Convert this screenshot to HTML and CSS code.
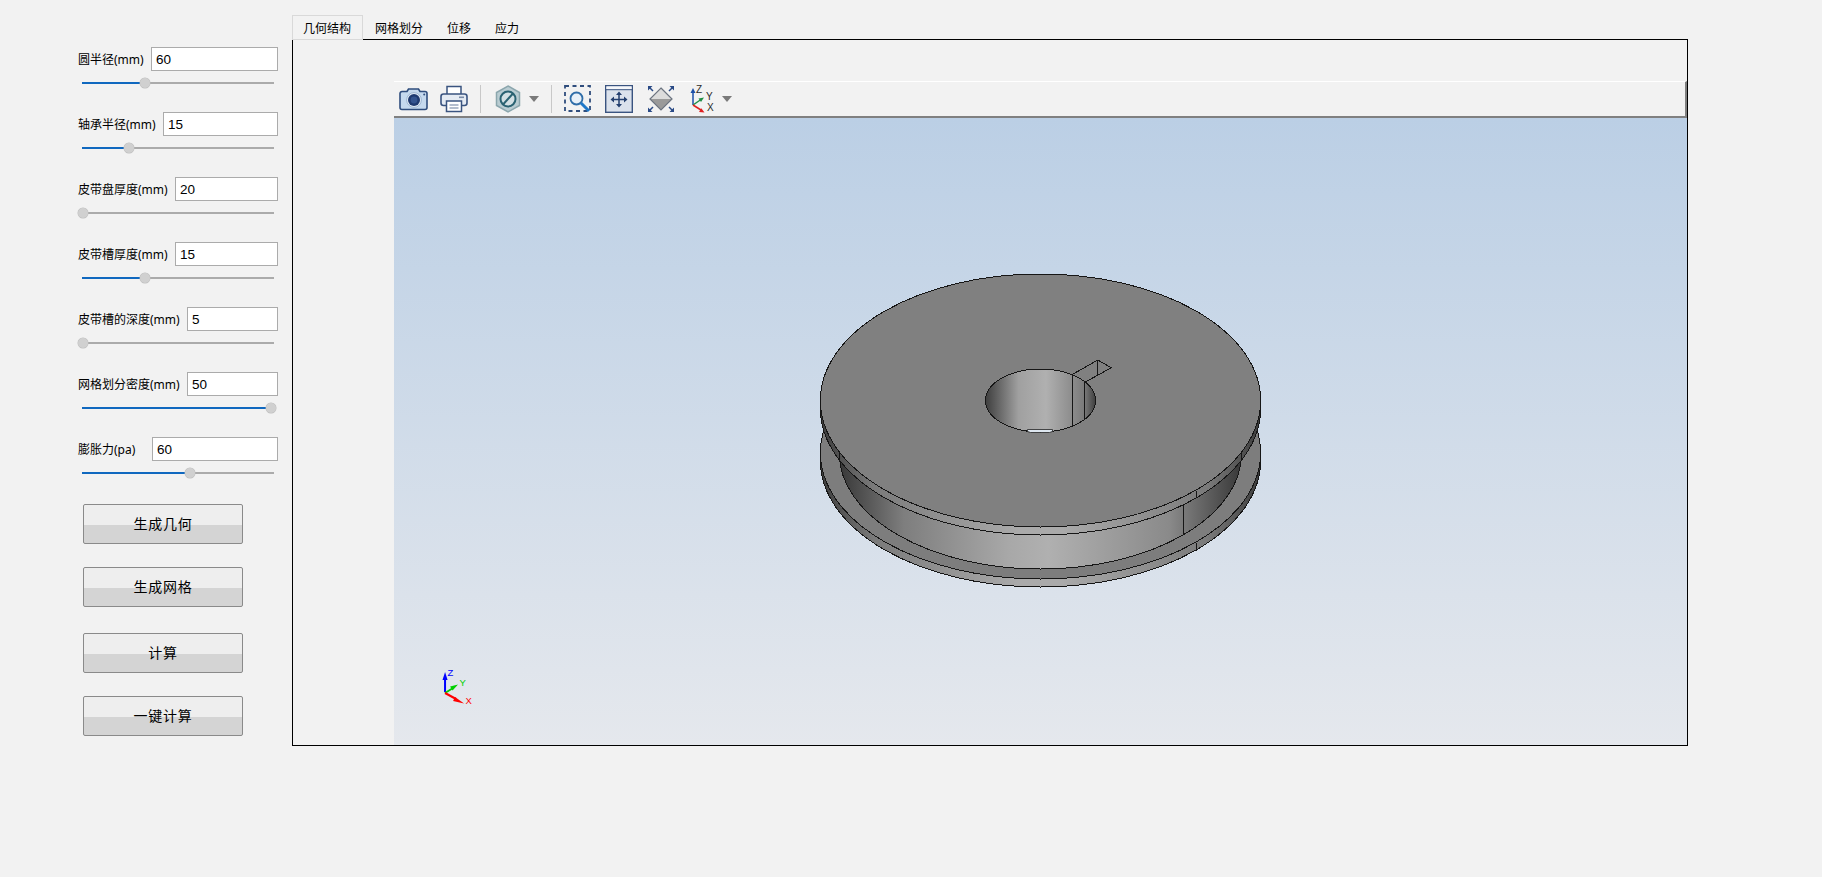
FILE: index.html
```html
<!DOCTYPE html>
<html lang="zh-CN">
<head>
<meta charset="utf-8">
<title>皮带轮计算</title>
<link rel="stylesheet" href="styles.css">
</head>
<body>
<div class="app">
  <aside class="sidebar">
    <div class="param">
      <div class="param-head"><span class="label w1">圆半径(mm)</span><div class="field">60</div></div>
      <div class="slider"><div class="fill" style="width:32.8%"></div><div class="knob" style="left:32.8%"></div></div>
    </div>
    <div class="param">
      <div class="param-head"><span class="label w2">轴承半径(mm)</span><div class="field">15</div></div>
      <div class="slider"><div class="fill" style="width:24.5%"></div><div class="knob" style="left:24.5%"></div></div>
    </div>
    <div class="param">
      <div class="param-head"><span class="label w3">皮带盘厚度(mm)</span><div class="field">20</div></div>
      <div class="slider"><div class="fill" style="width:0%"></div><div class="knob" style="left:0.5%"></div></div>
    </div>
    <div class="param">
      <div class="param-head"><span class="label w3">皮带槽厚度(mm)</span><div class="field">15</div></div>
      <div class="slider"><div class="fill" style="width:32.8%"></div><div class="knob" style="left:32.8%"></div></div>
    </div>
    <div class="param">
      <div class="param-head"><span class="label w4">皮带槽的深度(mm)</span><div class="field">5</div></div>
      <div class="slider"><div class="fill" style="width:0%"></div><div class="knob" style="left:0.5%"></div></div>
    </div>
    <div class="param">
      <div class="param-head"><span class="label w4">网格划分密度(mm)</span><div class="field">50</div></div>
      <div class="slider"><div class="fill" style="width:98.4%"></div><div class="knob" style="left:98.4%"></div></div>
    </div>
    <div class="param">
      <div class="param-head"><span class="label w5">膨胀力(pa)</span><div class="field">60</div></div>
      <div class="slider"><div class="fill" style="width:56.2%"></div><div class="knob" style="left:56.2%"></div></div>
    </div>
    <div class="actions">
      <div class="btn">生成几何</div>
      <div class="btn">生成网格</div>
      <div class="btn btn-gap">计算</div>
      <div class="btn">一键计算</div>
    </div>
  </aside>

  <main class="main">
    <nav class="tabs">
      <div class="tab tab-active">几何结构</div>
      <div class="tab">网格划分</div>
      <div class="tab">位移</div>
      <div class="tab">应力</div>
    </nav>
    <section class="panel">
      <div class="toolbar">
        <svg class="tool t-camera" width="30" height="26" viewBox="0 0 30 26">
          <path d="M3 5.500h5l1.500-2.500h10l1.500 2.500h5a2 2 0 0 1 2 2v14a2 2 0 0 1-2 2H3a2 2 0 0 1-2-2v-14a2 2 0 0 1 2-2z" fill="#c5d9ee" stroke="#2f4d7d" stroke-width="1.600"/>
          <circle cx="15" cy="14" r="7.400" fill="#e6eef7" stroke="#9db6d2"/>
          <circle cx="15" cy="14" r="6" fill="#1f3a70"/>
          <circle cx="15" cy="14" r="3.400" fill="#34548f"/>
          <circle cx="25.200" cy="8.600" r="1" fill="#2f4d7d"/>
        </svg>
        <svg class="tool t-print" width="28" height="28" viewBox="0 0 28 28">
          <path d="M7 9V1.500h14V9" fill="#fff" stroke="#3a5480" stroke-width="1.500"/>
          <rect x="1" y="9" width="26" height="11.500" rx="2.500" fill="#e5ebf3" stroke="#3a5480" stroke-width="1.600"/>
          <rect x="19" y="11.500" width="5" height="1.600" fill="#7a8ca8"/>
          <rect x="6.500" y="16" width="15" height="10.500" fill="#fff" stroke="#3a5480" stroke-width="1.500"/>
          <path d="M9.500 20h9M9.500 23h9" stroke="#9aa8bd" stroke-width="1.400"/>
        </svg>
        <div class="sep s1"></div>
        <svg class="tool t-hex" width="26" height="28" viewBox="0 0 26 28">
          <path d="M13 1l11.500 6.500v13L13 27 1.500 20.500v-13z" fill="#b9ccd2" stroke="#8ba6ad" stroke-width="1.500"/>
          <circle cx="13" cy="14" r="7.500" fill="#d3e0e4" stroke="#2a6272" stroke-width="2"/>
          <path d="M8 19.500L18 8.500" stroke="#2a6272" stroke-width="2"/>
        </svg>
        <div class="caret c1"></div>
        <div class="sep s2"></div>
        <svg class="tool t-zoom" width="28" height="28" viewBox="0 0 28 28">
          <rect x="1" y="1" width="25" height="25" fill="none" stroke="#2f4d7d" stroke-width="1.800" stroke-dasharray="4 3.500"/>
          <circle cx="12.500" cy="13.500" r="6" fill="#e8f0f8" stroke="#2f6da8" stroke-width="1.800"/>
          <path d="M17 18l8 8" stroke="#1f78c8" stroke-width="3"/>
        </svg>
        <svg class="tool t-fit" width="28" height="28" viewBox="0 0 28 28">
          <rect x="0.700" y="0.700" width="26.600" height="26.600" fill="#dbe2ec" stroke="#3a5480" stroke-width="1.400"/>
          <rect x="1.400" y="1.400" width="25.200" height="3" fill="#f5f7fa"/>
          <path d="M1 4.700h26" stroke="#3a5480"/>
          <path d="M14 8v13M7.500 14.500h13" stroke="#24406f" stroke-width="1.500"/>
          <path d="M14 6.500l-3 3.500h6zM14 22.500l-3-3.500h6zM5.500 14.500l3.500-3v6zM22.500 14.500l-3.500-3v6z" fill="#24406f"/>
        </svg>
        <svg class="tool t-diamond" width="28" height="28" viewBox="0 0 28 28">
          <path d="M14 3L25 14H3z" fill="#dcdcdc"/>
          <path d="M3 14h22L14 25z" fill="#9a9a9a"/>
          <path d="M14 3L25 14 14 25 3 14z" fill="none" stroke="#6c7480" stroke-width="1.200"/>
          <path d="M1 1h4.500L1 5.500zM27 1h-4.500L27 5.500zM1 27h4.500L1 22.500zM27 27h-4.500L27 22.500z" fill="#2a4a86"/>
          <path d="M2 2l4 4M26 2l-4 4M2 26l4-4M26 26l-4-4" stroke="#2a4a86" stroke-width="1.500"/>
        </svg>
        <svg class="tool t-axes" width="25" height="28" viewBox="0 0 25 28">
          <path d="M4 20V6" stroke="#1d4fa8" stroke-width="1.500"/>
          <path d="M4 3L1.500 8h5z" fill="#1d4fa8"/>
          <path d="M4 20l8-5.500" stroke="#1f8f45" stroke-width="1.500"/>
          <path d="M15 12.500l-5.500 1 2.500 3.500z" fill="#1f8f45"/>
          <path d="M4 20l8 5" stroke="#e02020" stroke-width="1.500"/>
          <path d="M15.500 27.500l-5.500-.500 2.300-3.800z" fill="#e02020"/>
          <text class="axis-mini" x="7" y="8">Z</text>
          <text class="axis-mini" x="17" y="15">Y</text>
          <text class="axis-mini" x="18" y="26">X</text>
        </svg>
        <div class="caret c2"></div>
      </div>
      <div class="viewport">
        <svg class="scene" viewBox="394 118 1292 627" preserveAspectRatio="none">
          <defs>
            <linearGradient id="gBand" gradientUnits="userSpaceOnUse" x1="820" y1="0" x2="1260" y2="0">
              <stop offset="0" stop-color="#3c3c3c"/>
              <stop offset="0.12" stop-color="#7a7a7a"/>
              <stop offset="0.45" stop-color="#aaaaaa"/>
              <stop offset="0.55" stop-color="#aaaaaa"/>
              <stop offset="0.88" stop-color="#7a7a7a"/>
              <stop offset="1" stop-color="#3c3c3c"/>
            </linearGradient>
            <linearGradient id="gGroove" gradientUnits="userSpaceOnUse" x1="839" y1="0" x2="1241" y2="0">
              <stop offset="0" stop-color="#383838"/>
              <stop offset="0.16" stop-color="#7e7e7e"/>
              <stop offset="0.42" stop-color="#a8a8a8"/>
              <stop offset="0.52" stop-color="#b0b0b0"/>
              <stop offset="0.82" stop-color="#8a8a8a"/>
              <stop offset="1" stop-color="#383838"/>
            </linearGradient>
            <linearGradient id="gHole" gradientUnits="userSpaceOnUse" x1="985" y1="0" x2="1095" y2="0">
              <stop offset="0" stop-color="#3e3e3e"/>
              <stop offset="0.3" stop-color="#a0a0a0"/>
              <stop offset="0.55" stop-color="#b0b0b0"/>
              <stop offset="0.79" stop-color="#8c8c8c"/>
              <stop offset="0.9" stop-color="#7a7a7a"/>
              <stop offset="1" stop-color="#3e3e3e"/>
            </linearGradient>
          </defs>
          <g class="model">
            <path d="M820 452.500A220 126.500 0 0 0 1260 452.500V460.500A220 126.500 0 0 1 820 460.500Z" fill="url(#gBand)"/>
            <ellipse cx="1040" cy="452.500" rx="220" ry="126.500" fill="#7d7d7d"/>
            <path d="M839 408.500A201 115.600 0 0 0 1241 408.500V453.500A201 115.600 0 0 1 839 453.500Z" fill="url(#gGroove)"/>
            <path d="M820 400.500A220 126.500 0 0 0 1260 400.500V408.500A220 126.500 0 0 1 820 408.500Z" fill="url(#gBand)"/>
            <ellipse cx="1040" cy="400.500" rx="220" ry="126.500" fill="#808080"/>
            <ellipse cx="1040" cy="400.500" rx="55" ry="31.500" fill="url(#gHole)"/>
            <path d="M1071.700 374.500L1097.300 360 1110.700 367.700 1084.300 382.300V370H1071.700Z" fill="#808080"/>
          </g>
          <g class="model-lines">
            <path d="M820 400.500A220 126.500 0 0 0 1260 400.500M820 408.500A220 126.500 0 0 0 1260 408.500"/>
            <path d="M820 400.500A220 126.500 0 0 1 1260 400.500"/>
            <path d="M820 400.500V408.500M1260 400.500V408.500"/>
            <path d="M839 460V453.500A201 115.600 0 0 0 1241 453.500V460"/>
            <path d="M823 431.700A220 126.500 0 0 0 820 452.500V460.500A220 126.500 0 0 0 1260 460.500V452.500A220 126.500 0 0 0 1257 431.700"/>
            <path d="M820 452.500A220 126.500 0 0 0 1260 452.500"/>
            <ellipse cx="1040" cy="400.500" rx="55" ry="31.500"/>
            <path d="M1071.700 374.500L1097.300 360 1110.700 367.700 1084.300 382.300V419.500M1071.700 374.500V426M1097.300 360V375"/>
            <path d="M1182.500 505V535M1195.700 491V498M1195.700 543V551"/>
          </g>
          <path d="M1027 429.500h25v2l-3 1h-19l-3-1z" fill="#dde6ef" stroke="#222" stroke-width="0.800"/>
          <path d="M445 692V676" stroke="#0000ff" stroke-width="2"/>
          <path d="M445 672l-2.500 8h5z" fill="#0000ff"/>
          <path d="M445 693l8-5" stroke="#00d000" stroke-width="2"/>
          <path d="M458 684.500l-8 2 2.500 4z" fill="#00d000"/>
          <path d="M445 693l11 6" stroke="#ff0000" stroke-width="2"/>
          <path d="M464 703.500l-9-6.500-2 4z" fill="#ff0000"/>
          <text class="axis-z" x="447.500" y="676">Z</text>
          <text class="axis-y" x="459.500" y="686">Y</text>
          <text class="axis-x" x="465.500" y="704">X</text>
        </svg>
      </div>
    </section>
  </main>
</div>
</body>
</html>
```

FILE: styles.css
```css
* { box-sizing: border-box; }
html, body { margin: 0; height: 100%; }
body {
  background: #f2f2f2;
  color: #000;
  font-family: "Noto Sans", "Noto Sans CJK SC", sans-serif;
  font-size: 12px;
  overflow: hidden;
}
.app { display: flex; height: 877px; }

/* left column */
.sidebar {
  flex: 0 0 292px;
  padding: 47px 14px 0 78px;
  display: flex;
  flex-direction: column;
}
.param { height: 65px; }
.param-head { display: flex; align-items: center; height: 24px; }
.label { flex: none; white-space: nowrap; line-height: 24px; padding-top: 2px; }
.w1 { width: 73px; }
.w2 { width: 85px; }
.w3 { width: 97px; }
.w4 { width: 109px; }
.w5 { width: 74px; }
.field {
  flex: 1;
  height: 24px;
  background: #fff;
  border: 1px solid #ababab;
  padding-left: 4px;
  font-size: 13.500px;
  line-height: 23px;
  font-family: "Liberation Sans", sans-serif;
}
.slider {
  position: relative;
  margin: 11px 4px 0;
  height: 2px;
  background: #ababab;
}
.fill { height: 2px; background: #1068bf; }
.knob {
  position: absolute;
  top: -4px;
  width: 10px;
  height: 10px;
  margin-left: -5px;
  border-radius: 50%;
  background: #d0d0d0;
  box-shadow: 0 0 0 0.500px #bdbdbd;
}
.actions { margin: 2px 0 0 5px; display: flex; flex-direction: column; gap: 23px; }
.btn {
  width: 160px;
  height: 40px;
  border: 1px solid #8a8a8a;
  border-radius: 2px;
  background: linear-gradient(#eeeeee 53%, #d4d4d4 53%);
  text-align: center;
  line-height: 38px;
  font-size: 14px;
  letter-spacing: 0.700px;
}
.btn-gap { margin-top: 3px; }

/* tabs and panel */
.main { flex: 0 0 1396px; padding-top: 15px; display: flex; flex-direction: column; }
.tabs { display: flex; height: 25px; margin-bottom: -1px; position: relative; z-index: 1; }
.tab { padding: 0 12px; line-height: 27px; white-space: nowrap; }
.tab-active {
  background: #f2f2f2;
  border: 1px solid #d9d9d9;
  padding: 0 11px 0 10px;
  line-height: 25px;
}
.panel {
  height: 707px;
  border: 1px solid #000;
  padding: 41px 0 0 101px;
  display: flex;
  flex-direction: column;
}
.toolbar {
  flex: 0 0 37px;
  display: flex;
  align-items: center;
  background: #f2f2f2;
  border-top: 1px solid #fff;
  border-bottom: 2px solid #808080;
  border-right: 2px solid #808080;
}
.tool { flex: none; display: block; }
.t-camera { margin-left: 5px; }
.t-print { margin-left: 11px; }
.t-hex { margin-left: 27px; }
.t-zoom { margin-left: 26px; }
.t-fit { margin-left: 13px; }
.t-diamond { margin-left: 14px; }
.t-axes { margin-left: 14px; }
.sep { flex: none; width: 1px; height: 28px; background: #c8c8c8; }
.s1 { margin-left: 12px; margin-right: -13px; }
.s2 { margin-left: 12px; margin-right: -14px; }
.caret {
  flex: none;
  width: 0;
  height: 0;
  border-left: 5px solid transparent;
  border-right: 5px solid transparent;
  border-top: 6px solid #7a7a7a;
}
.c1 { margin-left: 8px; }
.c2 { margin-left: 8px; }
.axis-mini { font: 10px "Liberation Sans", sans-serif; fill: #2b2b2b; }

.viewport {
  flex: 1;
  min-height: 0;
  background: linear-gradient(#bbcfe5, #e5e8ed);
}
.scene { display: block; width: 100%; height: 100%; }
.model { shape-rendering: crispEdges; }
.model-lines { fill: none; stroke: #161616; stroke-width: 1; shape-rendering: crispEdges; }
.axis-z, .axis-y, .axis-x { font: 9.500px "Liberation Sans", sans-serif; }
.axis-z { fill: #0000ff; }
.axis-y { fill: #00d000; }
.axis-x { fill: #ff0000; }
```
